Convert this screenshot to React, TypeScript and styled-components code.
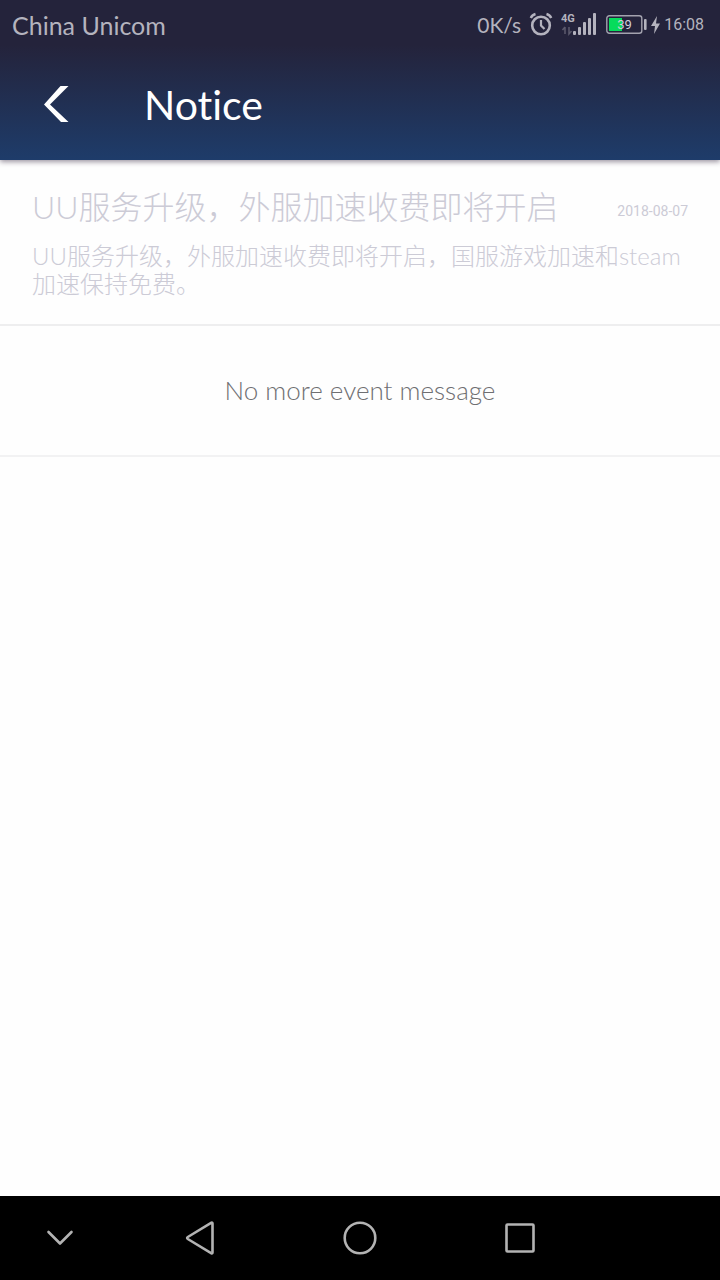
import React from "react";
import styled, { createGlobalStyle } from "styled-components";

const latin = `Lato, "Noto Sans CJK SC", sans-serif`;
const numeric = `Roboto, "Liberation Sans", sans-serif`;

const GlobalStyle = createGlobalStyle`
  *, *::before, *::after { box-sizing: border-box; }
  body {
    margin: 0;
    background: #fefefe;
    font-family: ${latin};
    font-variant-ligatures: none;
  }
`;

const Screen = styled.div`
  display: flex;
  flex-direction: column;
  min-height: 100vh;
`;

const Header = styled.header`
  position: relative;
  background: linear-gradient(#24233b 0%, #24233b 28%, #1e3c6a 100%);
  box-shadow: 0 2px 5px rgba(40, 25, 50, 0.45);
`;

const StatusBar = styled.div`
  display: flex;
  align-items: center;
  justify-content: space-between;
  height: 50px;
  padding: 0 16px 0 12px;
  color: #b4b3be;
`;

const Carrier = styled.span`
  font-size: 25px;
  line-height: 32px;
`;

const StatusGroup = styled.div`
  display: flex;
  align-items: center;
  gap: 8px;
`;

const Speed = styled.span`
  font-size: 21px;
  line-height: 32px;
`;

const Clock = styled.span`
  font-family: ${numeric};
  font-size: 16px;
  line-height: 32px;
`;

const Power = styled.div`
  display: flex;
  align-items: center;
  gap: 4px;
`;

const TitleBar = styled.div`
  display: flex;
  align-items: center;
  gap: 64px;
  height: 110px;
  padding: 0 32px;
`;

const BackButton = styled.button`
  display: flex;
  padding: 0;
  border: 0;
  background: none;
`;

const PageTitle = styled.h1`
  margin: 0;
  color: #fff;
  font-size: 41px;
  font-weight: 400;
  line-height: 48px;
`;

const Content = styled.main`
  flex: 1;
`;

const Notice = styled.article`
  padding: 24px 32px;
  border-bottom: 2px solid #eeeeef;
  color: #cccbd6;
  font-weight: 300;
`;

const NoticeHead = styled.div`
  display: flex;
  align-items: center;
  justify-content: space-between;
  gap: 16px;
`;

const NoticeTitle = styled.h2`
  margin: 0;
  font-size: 32px;
  font-weight: 300;
  line-height: 46px;
`;

const NoticeDate = styled.time`
  flex: none;
  padding-top: 8px;
  font-family: ${numeric};
  font-size: 14px;
  font-weight: 400;
  line-height: 24px;
`;

const NoticeBody = styled.p`
  margin: 12px 0 2px;
  font-size: 24px;
  line-height: 28px;
`;

const EndMessage = styled.p`
  margin: 0;
  padding: 48px 32px;
  border-bottom: 2px solid #f2f2f3;
  color: #6f6f72;
  font-size: 26px;
  font-weight: 300;
  line-height: 33px;
  text-align: center;
`;

const NavBar = styled.nav`
  display: grid;
  grid-template-columns: 3fr 4fr 4fr 4fr 3fr;
  height: 84px;
  background: #000;
`;

const NavButton = styled.button`
  display: flex;
  align-items: center;
  justify-content: center;
  padding: 0;
  border: 0;
  background: none;
  color: #b3b3b3;
`;

const NavIcon = ({ children }: { children: React.ReactNode }) => (
  <svg width="40" height="40" viewBox="0 0 40 40" fill="none" stroke="currentColor" strokeWidth="2.6" strokeLinecap="round" strokeLinejoin="round" aria-hidden="true">
    {children}
  </svg>
);

const AlarmIcon = () => (
  <svg width="24" height="26" viewBox="0 0 24 26" fill="none" stroke="currentColor" aria-hidden="true">
    <circle cx="12" cy="13.5" r="8.8" strokeWidth="2.6" />
    <path d="M12 8V13.5l3.5 3.5" strokeWidth="2.2" />
    <path d="M1.8 6Q3 3 6.5 2M22.2 6Q21 3 17.5 2" strokeWidth="2.4" />
  </svg>
);

const SignalIcon = () => (
  <svg width="37" height="26" viewBox="0 0 37 26" fill="currentColor" aria-hidden="true">
    <text x="0" y="10" fontFamily="Roboto, sans-serif" fontSize="11" fontWeight="700">4G</text>
    <path d="M4 15v7M1.5 18L4 15M8 15v7l2.5-3" fill="none" stroke="#5c5b6d" strokeWidth="1.5" />
    <rect x="12" y="19" width="3" height="4" rx="1" />
    <rect x="17" y="15" width="3" height="8" rx="1" />
    <rect x="22" y="10" width="3" height="13" rx="1" />
    <rect x="27" y="6" width="3" height="17" rx="1" />
    <rect x="32" y="1" width="3" height="22" rx="1" />
  </svg>
);

const BatteryIcon = () => (
  <svg width="41" height="20" viewBox="0 0 41 20" role="img" aria-label="Battery 39%">
    <rect x="0.8" y="0.8" width="35" height="17.500" rx="2.5" fill="none" stroke="#a3a2ae" strokeWidth="1.4" />
    <rect x="3" y="3" width="13" height="13" fill="#07dc5c" />
    <rect x="38" y="4" width="2.6" height="11" rx="1" fill="#b4b3be" />
    <text x="18.5" y="14" textAnchor="middle" fill="#d0cfd8" fontFamily="Roboto, sans-serif" fontSize="13">39</text>
  </svg>
);

const BoltIcon = () => (
  <svg width="9" height="18" viewBox="0 0 9 18" fill="currentColor" aria-hidden="true">
    <path d="M6 0L0 10h4L3 18l6-10.5H5z" />
  </svg>
);

export default function App() {
  return (
    <Screen>
      <GlobalStyle />
      <Header>
        <StatusBar>
          <Carrier>China Unicom</Carrier>
          <StatusGroup>
            <Speed>0K/s</Speed>
            <AlarmIcon />
            <SignalIcon />
            <Power>
              <BatteryIcon />
              <BoltIcon />
              <Clock>16:08</Clock>
            </Power>
          </StatusGroup>
        </StatusBar>
        <TitleBar>
          <BackButton type="button" aria-label="Back">
            <svg width="48" height="48" viewBox="0 0 48 48" fill="#fff" aria-hidden="true">
              <path d="M28.5 5H36.5L18 23.5 36.5 41H29L12 23.5z" />
            </svg>
          </BackButton>
          <PageTitle>Notice</PageTitle>
        </TitleBar>
      </Header>
      <Content lang="zh-CN">
        <Notice>
          <NoticeHead>
            <NoticeTitle>UU服务升级，外服加速收费即将开启</NoticeTitle>
            <NoticeDate dateTime="2018-08-07">2018-08-07</NoticeDate>
          </NoticeHead>
          <NoticeBody>UU服务升级，外服加速收费即将开启，国服游戏加速和steam加速保持免费。</NoticeBody>
        </Notice>
        <EndMessage lang="en">No more event message</EndMessage>
      </Content>
      <NavBar aria-label="System navigation">
        <NavButton type="button" aria-label="Hide bar">
          <NavIcon><path d="M8.5 14L20 25.5 31.5 14" /></NavIcon>
        </NavButton>
        <NavButton type="button" aria-label="Back">
          <NavIcon><path d="M31.5 4.7Q32.5 4.2 32.5 5.5V34.5Q32.5 35.8 31.5 35.3L7.800 21Q6.5 20 7.800 19Z" /></NavIcon>
        </NavButton>
        <NavButton type="button" aria-label="Home">
          <NavIcon><circle cx="20" cy="20" r="15.3" /></NavIcon>
        </NavButton>
        <NavButton type="button" aria-label="Recent apps">
          <NavIcon><rect x="6.5" y="6.5" width="27" height="27" rx="1" /></NavIcon>
        </NavButton>
      </NavBar>
    </Screen>
  );
}
